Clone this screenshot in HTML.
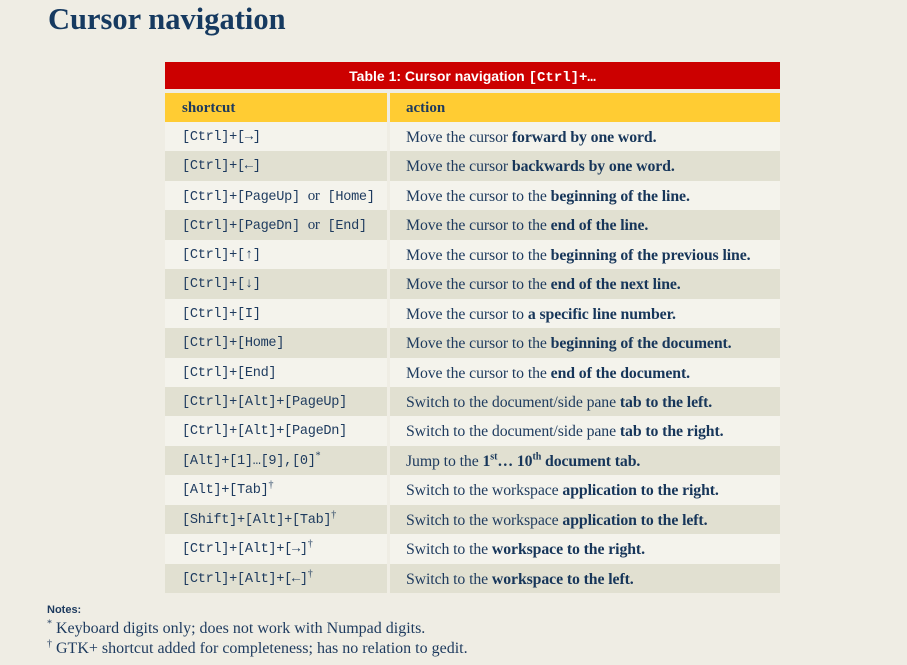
<!DOCTYPE html>
<html><head><meta charset="utf-8"><style>
body{margin:0;width:907px;height:665px;background:#efede4;font-family:"Liberation Serif",serif;color:#1d3a5e;position:relative;overflow:hidden}
h1{position:absolute;left:48px;top:0;margin:0;font-size:30.5px;font-weight:bold;color:#163a60;line-height:38px}
.tbl{position:absolute;left:165px;top:62px;width:615px}
.cap{height:27px;background:#cc0000;color:#fff;font:bold 14px "Liberation Sans",sans-serif;text-align:center;line-height:28px}
.cap code{font:bold 14px "Liberation Mono",monospace}
.row{display:flex;height:29.45px;line-height:31px;font-size:15.8px;letter-spacing:-0.1px}
.row>div{box-sizing:border-box;white-space:nowrap}
.a{width:222px;padding-left:17px;font-family:"Liberation Mono",monospace;font-size:13.6px;letter-spacing:-0.3px}
.b{width:390px;margin-left:3px;padding-left:16px}
.hd{margin-top:4px;height:29px}
.hd div{background:#ffcc33;font-weight:bold;font-family:"Liberation Serif",serif;font-size:15px;letter-spacing:0}
.row.l div{background:#f4f3ec}
.row.d div{background:#e1e0d1}
b{color:#17365a}
sup{font-size:10px;line-height:0;font-family:"Liberation Serif",serif}
.notes{position:absolute;left:47px;top:603px;font-size:16px;line-height:20px}
.notes .n{font:bold 11px "Liberation Sans",sans-serif;margin-bottom:2px;line-height:14px}
</style></head><body>
<h1>Cursor navigation</h1>
<div class="tbl">
<div class="cap">Table 1: Cursor navigation <code>[Ctrl]+…</code></div>
<div class="row hd"><div class="a">shortcut</div><div class="b">action</div></div>
<div class="row l"><div class="a">[Ctrl]+[→]</div><div class="b">Move the cursor <b>forward by one word.</b></div></div>
<div class="row d"><div class="a">[Ctrl]+[←]</div><div class="b">Move the cursor <b>backwards by one word.</b></div></div>
<div class="row l"><div class="a">[Ctrl]+[PageUp] <span style="font-family:'Liberation Serif',serif;font-size:15px">or</span> [Home]</div><div class="b">Move the cursor to the <b>beginning of the line.</b></div></div>
<div class="row d"><div class="a">[Ctrl]+[PageDn] <span style="font-family:'Liberation Serif',serif;font-size:15px">or</span> [End]</div><div class="b">Move the cursor to the <b>end of the line.</b></div></div>
<div class="row l"><div class="a">[Ctrl]+[↑]</div><div class="b">Move the cursor to the <b>beginning of the previous line.</b></div></div>
<div class="row d"><div class="a">[Ctrl]+[↓]</div><div class="b">Move the cursor to the <b>end of the next line.</b></div></div>
<div class="row l"><div class="a">[Ctrl]+[I]</div><div class="b">Move the cursor to <b>a specific line number.</b></div></div>
<div class="row d"><div class="a">[Ctrl]+[Home]</div><div class="b">Move the cursor to the <b>beginning of the document.</b></div></div>
<div class="row l"><div class="a">[Ctrl]+[End]</div><div class="b">Move the cursor to the <b>end of the document.</b></div></div>
<div class="row d"><div class="a">[Ctrl]+[Alt]+[PageUp]</div><div class="b">Switch to the document/side pane <b>tab to the left.</b></div></div>
<div class="row l"><div class="a">[Ctrl]+[Alt]+[PageDn]</div><div class="b">Switch to the document/side pane <b>tab to the right.</b></div></div>
<div class="row d"><div class="a">[Alt]+[1]…[9],[0]<sup>*</sup></div><div class="b">Jump to the <b>1<sup>st</sup>… 10<sup>th</sup> document tab.</b></div></div>
<div class="row l"><div class="a">[Alt]+[Tab]<sup>†</sup></div><div class="b">Switch to the workspace <b>application to the right.</b></div></div>
<div class="row d"><div class="a">[Shift]+[Alt]+[Tab]<sup>†</sup></div><div class="b">Switch to the workspace <b>application to the left.</b></div></div>
<div class="row l"><div class="a">[Ctrl]+[Alt]+[→]<sup>†</sup></div><div class="b">Switch to the <b>workspace to the right.</b></div></div>
<div class="row d"><div class="a">[Ctrl]+[Alt]+[←]<sup>†</sup></div><div class="b">Switch to the <b>workspace to the left.</b></div></div>
</div>
<div class="notes">
<div class="n">Notes:</div>
<div><sup>*</sup> Keyboard digits only; does not work with Numpad digits.</div>
<div><sup>†</sup> GTK+ shortcut added for completeness; has no relation to gedit.</div>
</div>
</body></html>
